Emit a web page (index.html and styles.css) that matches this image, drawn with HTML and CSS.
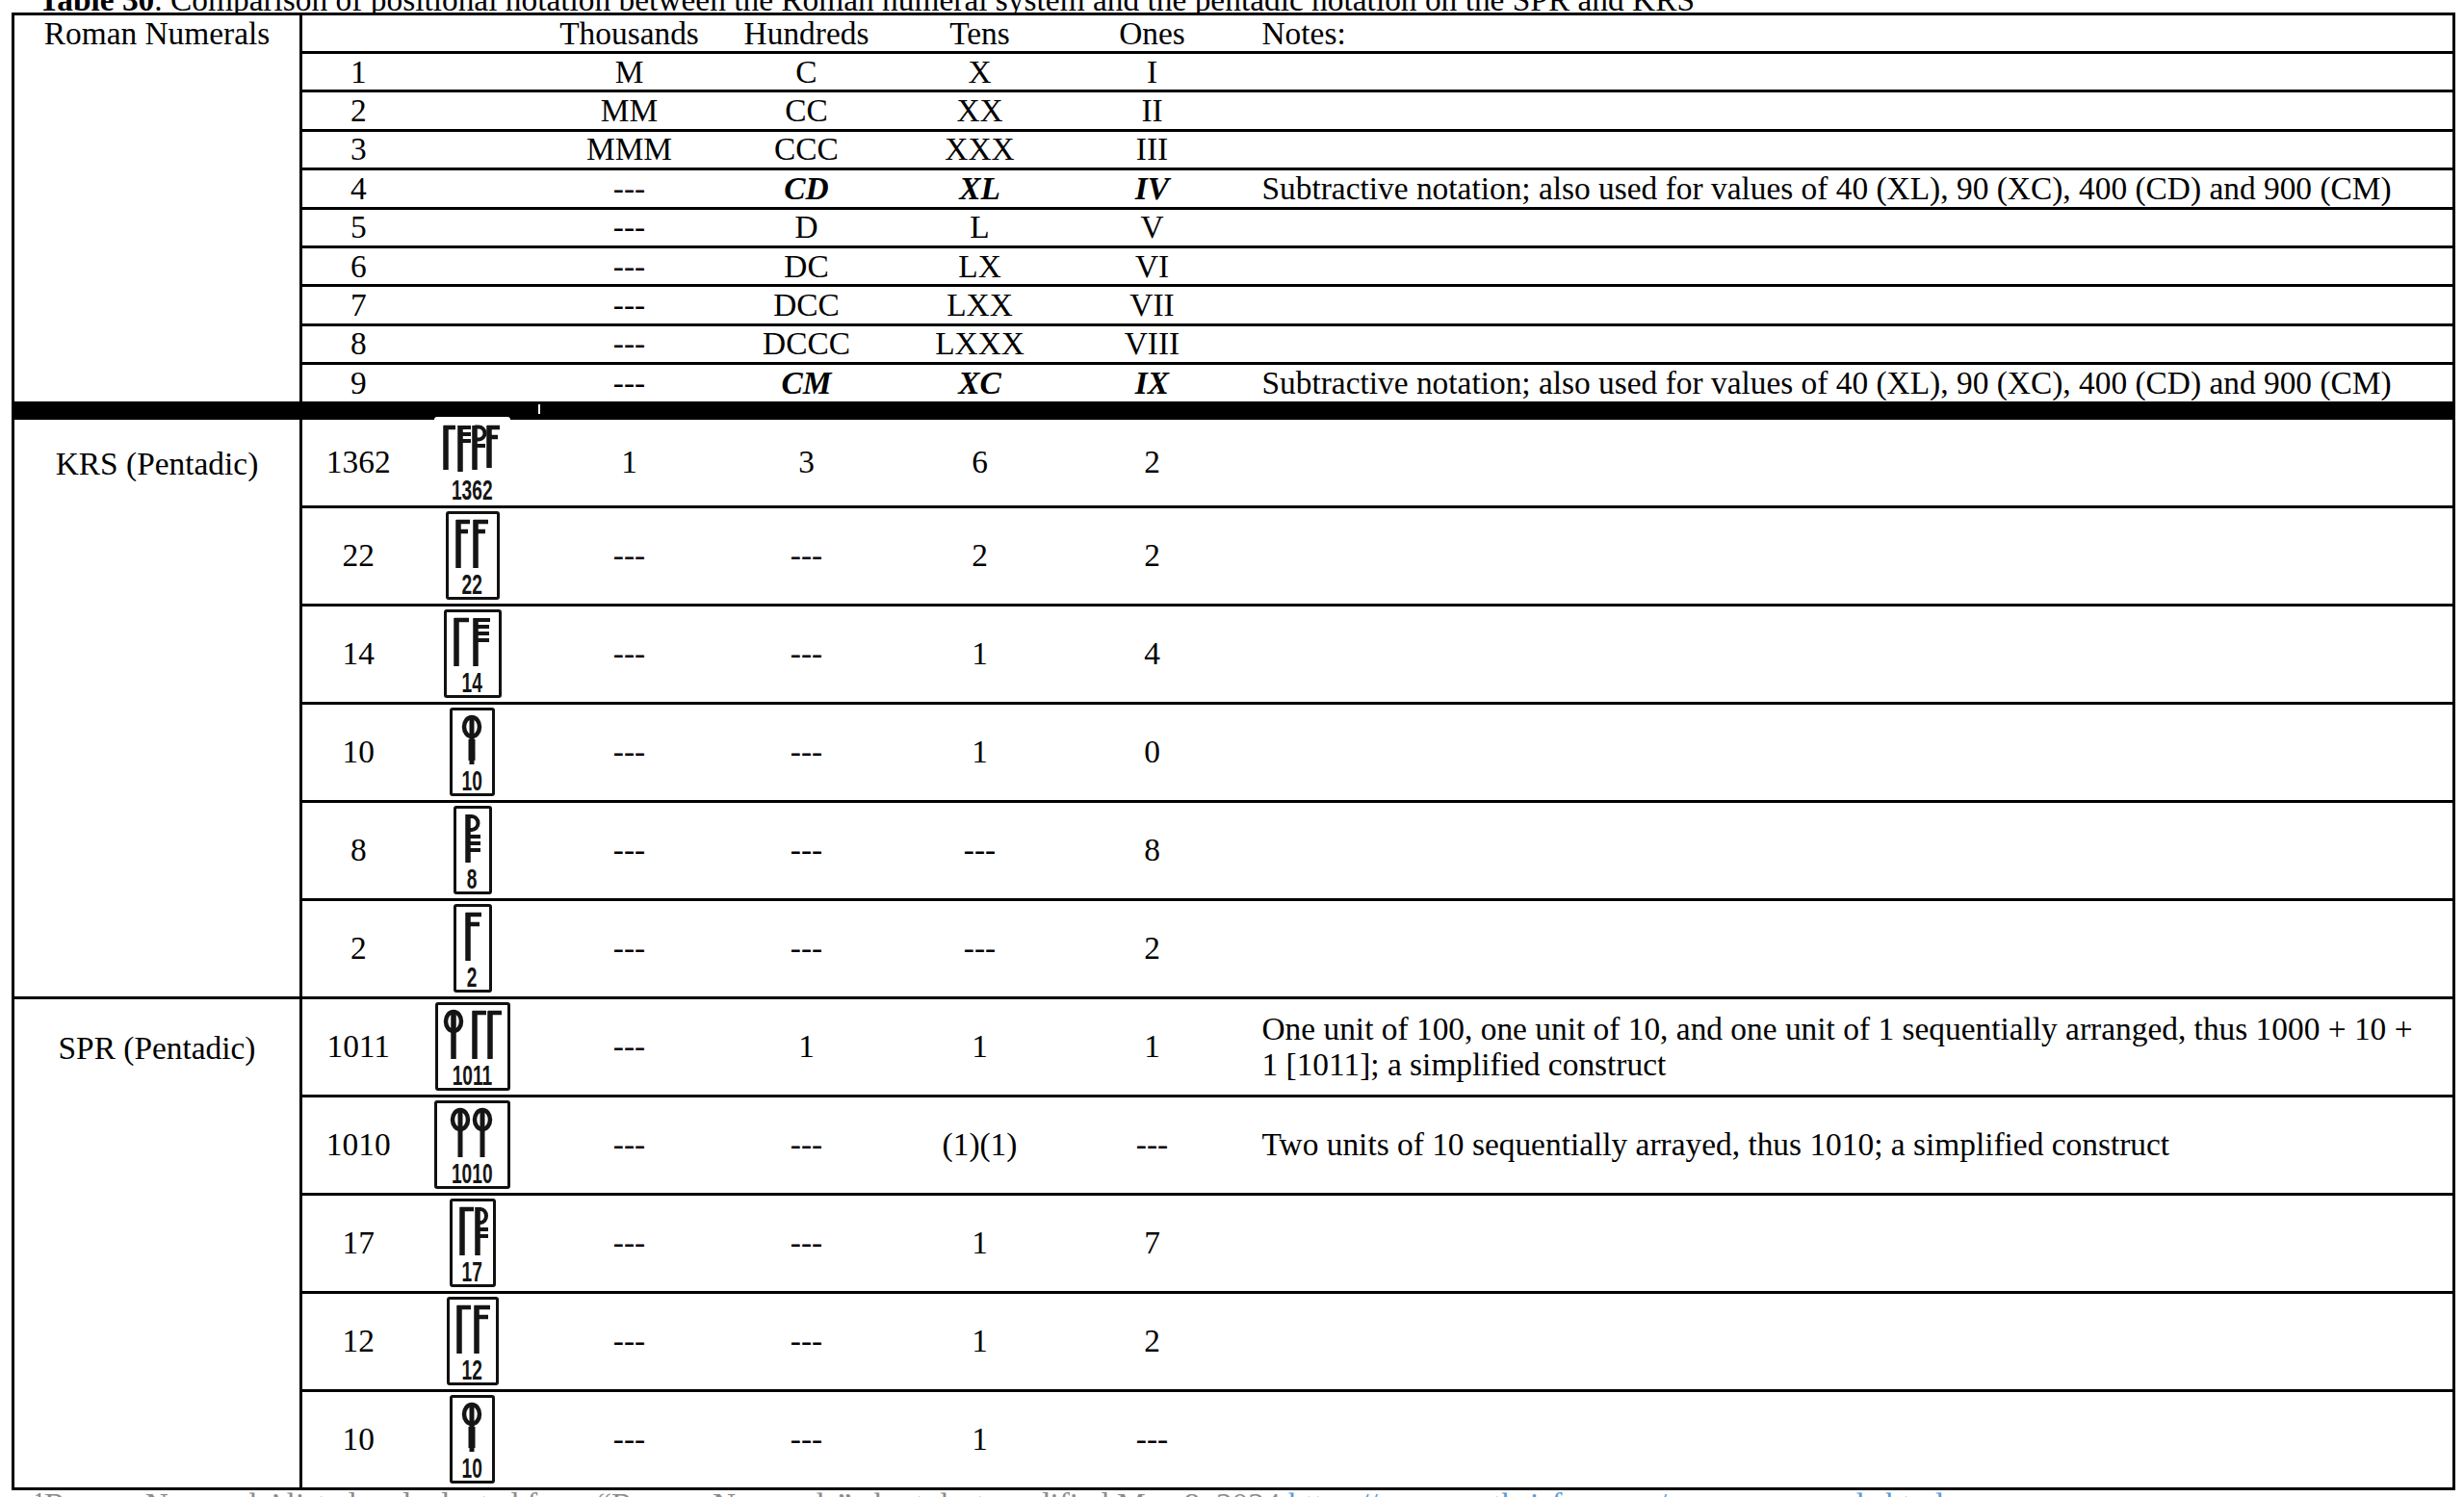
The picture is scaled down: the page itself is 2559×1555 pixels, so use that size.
FILE: index.html
```html
<!DOCTYPE html>
<html lang="en">
<head>
<meta charset="utf-8">
<title>Table 30</title>
<link rel="stylesheet" href="styles.css">
</head>
<body>
<div class="page">
  <p class="caption"><b>Table 30</b>. Comparison of positional notation between the Roman numeral system and the pentadic notation on the SPR and KRS</p>
  <table class="t">
    <colgroup>
      <col class="c-grp"><col class="c-num"><col class="c-img"><col class="c-th"><col class="c-hu"><col class="c-te"><col class="c-on"><col class="c-notes">
    </colgroup>
    <tbody>
      <tr class="hd">
        <td class="grp g-roman" rowspan="10">Roman Numerals</td>
        <td></td><td></td><td>Thousands</td><td>Hundreds</td><td>Tens</td><td>Ones</td><td class="note">Notes:</td>
      </tr>
      <tr class="r"><td>1</td><td></td><td>M</td><td>C</td><td>X</td><td>I</td><td class="note"></td></tr>
      <tr class="r"><td>2</td><td></td><td>MM</td><td>CC</td><td>XX</td><td>II</td><td class="note"></td></tr>
      <tr class="r"><td>3</td><td></td><td>MMM</td><td>CCC</td><td>XXX</td><td>III</td><td class="note"></td></tr>
      <tr class="r"><td>4</td><td></td><td>---</td><td class="bi">CD</td><td class="bi">XL</td><td class="bi">IV</td><td class="note">Subtractive notation; also used for values of 40 (XL), 90 (XC), 400 (CD) and 900 (CM)</td></tr>
      <tr class="r"><td>5</td><td></td><td>---</td><td>D</td><td>L</td><td>V</td><td class="note"></td></tr>
      <tr class="r"><td>6</td><td></td><td>---</td><td>DC</td><td>LX</td><td>VI</td><td class="note"></td></tr>
      <tr class="r"><td>7</td><td></td><td>---</td><td>DCC</td><td>LXX</td><td>VII</td><td class="note"></td></tr>
      <tr class="r"><td>8</td><td></td><td>---</td><td>DCCC</td><td>LXXX</td><td>VIII</td><td class="note"></td></tr>
      <tr class="r"><td>9</td><td></td><td>---</td><td class="bi">CM</td><td class="bi">XC</td><td class="bi">IX</td><td class="note">Subtractive notation; also used for values of 40 (XL), 90 (XC), 400 (CD) and 900 (CM)</td></tr>

      <tr class="bar"><td colspan="8" class="barc"><span class="nick"></span></td></tr>

      <tr class="p first-krs">
        <td class="grp g-krs" rowspan="6">KRS (Pentadic)</td>
        <td>1362</td>
        <td><div class="pict nob">
          <svg class="g" width="62" height="54" viewBox="0 0 62 54">
            <path d="M4 2V48" stroke-width="5.5"/><path d="M2 4H14" stroke-width="4.5"/>
            <path d="M19 2V50" stroke-width="5.5"/><path d="M17 4H30M19 11H30M19 18H30" stroke-width="4"/>
            <path d="M34 2V48" stroke-width="5.5"/><path d="M34 3.5h4a6.5 6.5 0 0 1 0 13h-4" stroke-width="4"/><path d="M34 23H45" stroke-width="4"/>
            <path d="M49 2V46" stroke-width="5.5"/><path d="M47 4H60M49 14H58" stroke-width="4.5"/>
          </svg>
          <span class="pn">1362</span></div></td>
        <td>1</td><td>3</td><td>6</td><td>2</td><td class="note"></td>
      </tr>
      <tr class="p">
        <td>22</td>
        <td><div class="pict">
          <svg class="g" width="42" height="54" viewBox="0 0 42 54">
            <path d="M6 2V52M24 2V52" stroke-width="5.5"/>
            <path d="M4 4H18M6 14H16M22 4H37M24 14H34" stroke-width="4.5"/>
          </svg>
          <span class="pn">22</span></div></td>
        <td>---</td><td>---</td><td>2</td><td>2</td><td class="note"></td>
      </tr>
      <tr class="p">
        <td>14</td>
        <td><div class="pict">
          <svg class="g" width="46" height="54" viewBox="0 0 46 54">
            <path d="M6 2V52M26 2V52" stroke-width="5.5"/>
            <path d="M4 4H19" stroke-width="4.5"/>
            <path d="M24 4H41M26 11H40M26 18H40M26 25H40" stroke-width="4"/>
          </svg>
          <span class="pn">14</span></div></td>
        <td>---</td><td>---</td><td>1</td><td>4</td><td class="note"></td>
      </tr>
      <tr class="p">
        <td>10</td>
        <td><div class="pict">
          <svg class="g" width="26" height="54" viewBox="0 0 26 54">
            <ellipse cx="13" cy="13" rx="8" ry="10" stroke-width="4.5"/>
            <path d="M13 2V52" stroke-width="5"/>
            <path d="M13 26V48" stroke-width="7"/>
          </svg>
          <span class="pn">10</span></div></td>
        <td>---</td><td>---</td><td>1</td><td>0</td><td class="note"></td>
      </tr>
      <tr class="p">
        <td>8</td>
        <td><div class="pict">
          <svg class="g" width="26" height="54" viewBox="0 0 26 54">
            <path d="M8 2V52" stroke-width="5.5"/>
            <path d="M8 4h4a6.5 7 0 0 1 0 14h-4" stroke-width="4"/>
            <path d="M8 25H21M8 32H21M8 39H21" stroke-width="4"/>
          </svg>
          <span class="pn">8</span></div></td>
        <td>---</td><td>---</td><td>---</td><td>8</td><td class="note"></td>
      </tr>
      <tr class="p">
        <td>2</td>
        <td><div class="pict">
          <svg class="g" width="26" height="54" viewBox="0 0 26 54">
            <path d="M8 2V52" stroke-width="5.5"/>
            <path d="M6 4H22M8 14H20" stroke-width="4.5"/>
          </svg>
          <span class="pn">2</span></div></td>
        <td>---</td><td>---</td><td>---</td><td>2</td><td class="note"></td>
      </tr>

      <tr class="p first-spr">
        <td class="grp g-spr" rowspan="5">SPR (Pentadic)</td>
        <td>1011</td>
        <td><div class="pict">
          <svg class="g" width="64" height="54" viewBox="0 0 64 54">
            <ellipse cx="12" cy="13" rx="8" ry="10" stroke-width="4.5"/>
            <path d="M12 2V52M34 2V52M50 2V52" stroke-width="5.5"/>
            <path d="M32 4H46M48 4H62" stroke-width="4.5"/>
          </svg>
          <span class="pn">1011</span></div></td>
        <td>---</td><td>1</td><td>1</td><td>1</td>
        <td class="note multi">One unit of 100, one unit of 10, and one unit of 1 sequentially arranged, thus 1000 + 10 +<br>1 [1011]; a simplified construct</td>
      </tr>
      <tr class="p">
        <td>1010</td>
        <td><div class="pict">
          <svg class="g" width="48" height="54" viewBox="0 0 48 54">
            <ellipse cx="12" cy="13" rx="8" ry="10" stroke-width="4.5"/>
            <ellipse cx="35" cy="13" rx="8" ry="10" stroke-width="4.5"/>
            <path d="M12 2V52M35 2V52" stroke-width="5"/>
          </svg>
          <span class="pn">1010</span></div></td>
        <td>---</td><td>---</td><td>(1)(1)</td><td>---</td>
        <td class="note">Two units of 10 sequentially arrayed, thus 1010; a simplified construct</td>
      </tr>
      <tr class="p">
        <td>17</td>
        <td><div class="pict">
          <svg class="g" width="34" height="54" viewBox="0 0 34 54">
            <path d="M6 2V52M22 2V52" stroke-width="5.5"/>
            <path d="M4 4H18" stroke-width="4.5"/>
            <path d="M22 4h3a6 7 0 0 1 0 14h-3" stroke-width="4"/>
            <path d="M22 25H33M22 32H33" stroke-width="4"/>
          </svg>
          <span class="pn">17</span></div></td>
        <td>---</td><td>---</td><td>1</td><td>7</td><td class="note"></td>
      </tr>
      <tr class="p">
        <td>12</td>
        <td><div class="pict">
          <svg class="g" width="40" height="54" viewBox="0 0 40 54">
            <path d="M6 2V52M24 2V52" stroke-width="5.5"/>
            <path d="M4 4H18M22 4H38M24 14H36" stroke-width="4.5"/>
          </svg>
          <span class="pn">12</span></div></td>
        <td>---</td><td>---</td><td>1</td><td>2</td><td class="note"></td>
      </tr>
      <tr class="p">
        <td>10</td>
        <td><div class="pict">
          <svg class="g" width="26" height="54" viewBox="0 0 26 54">
            <ellipse cx="13" cy="13" rx="8" ry="10" stroke-width="4.5"/>
            <path d="M13 2V52" stroke-width="5"/>
            <path d="M13 26V48" stroke-width="7"/>
          </svg>
          <span class="pn">10</span></div></td>
        <td>---</td><td>---</td><td>1</td><td>---</td><td class="note"></td>
      </tr>
    </tbody>
  </table>
  <p class="foot"><span class="fg">¹Roman Numerals’ listed and adapted from “Roman Numerals” chart, last modified May 8, 2024</span> <span class="fl">https://www.mathsisfun.com/roman-numerals.html</span></p>
</div>
</body>
</html>
```
FILE: styles.css
```css
html, body {
  margin: 0;
  padding: 0;
  background: #fff;
}
body {
  font-family: "Liberation Serif", "Times New Roman", serif;
  font-size: 33.4px;
  color: #000;
  overflow: hidden;
}
.page {
  padding-left: 12px;
  width: 2538px;
}
.caption {
  margin: -7px 0 0 0;
  padding-left: 28px;
  height: 20px;
  line-height: 13px;
  white-space: nowrap;
}
.t {
  border-collapse: collapse;
  table-layout: fixed;
  width: 2538px;
  border: 3px solid #000;
  position: relative;
  background: #fff;
}
.c-grp { width: 299px; }
.c-num { width: 118px; }
.c-img { width: 120px; }
.c-th { width: 206px; }
.c-hu { width: 162px; }
.c-te { width: 198px; }
.c-on { width: 160px; }
.t td {
  padding: 0;
  text-align: center;
  vertical-align: middle;
  line-height: 34px;
  border-top: 3px solid #000;
  border-bottom: 3px solid #000;
  white-space: nowrap;
}
.t td.note {
  text-align: left;
  padding-left: 34px;
  padding-right: 8px;
}
.t td.multi {
  line-height: 37.5px;
}
.t td.grp {
  border-right: 3px solid #000;
  vertical-align: top;
}
.t td.g-roman { padding-top: 2px; }
.t td.g-krs { padding-top: 29px; }
.t td.g-spr { padding-top: 34px; }
.bi {
  font-weight: bold;
  font-style: italic;
}
tr.hd { height: 40px; }
tr.r { height: 40.4px; }
tr.bar { height: 16px; }
tr.p { height: 102px; }
tr.first-krs { height: 92px; }
.barc {
  background: #000;
  position: relative;
}
.nick {
  position: absolute;
  left: 544px;
  top: 0;
  width: 2px;
  height: 10px;
  background: #fff;
}
.pict {
  display: inline-flex;
  flex-direction: column;
  align-items: center;
  border: 3px solid #111;
  border-radius: 3px;
  padding: 4px 4px 1px;
  background: #fff;
  vertical-align: middle;
}
.pict.nob {
  border-color: transparent;
  margin: -4px 0 -2px;
}
.g {
  display: block;
  stroke: #151515;
  fill: none;
}
.pn {
  display: block;
  font-family: "Liberation Sans", Arial, sans-serif;
  font-weight: bold;
  font-size: 29px;
  line-height: 24px;
  height: 24px;
  margin-top: 3px;
  color: #151515;
  transform: scaleX(0.66);
}
.foot {
  margin: -4px 0 0 0;
  padding-left: 24px;
  line-height: 38px;
  white-space: nowrap;
}
.fg { color: #8c8c8c; }
.fl { color: #5b9bd5; }
```
